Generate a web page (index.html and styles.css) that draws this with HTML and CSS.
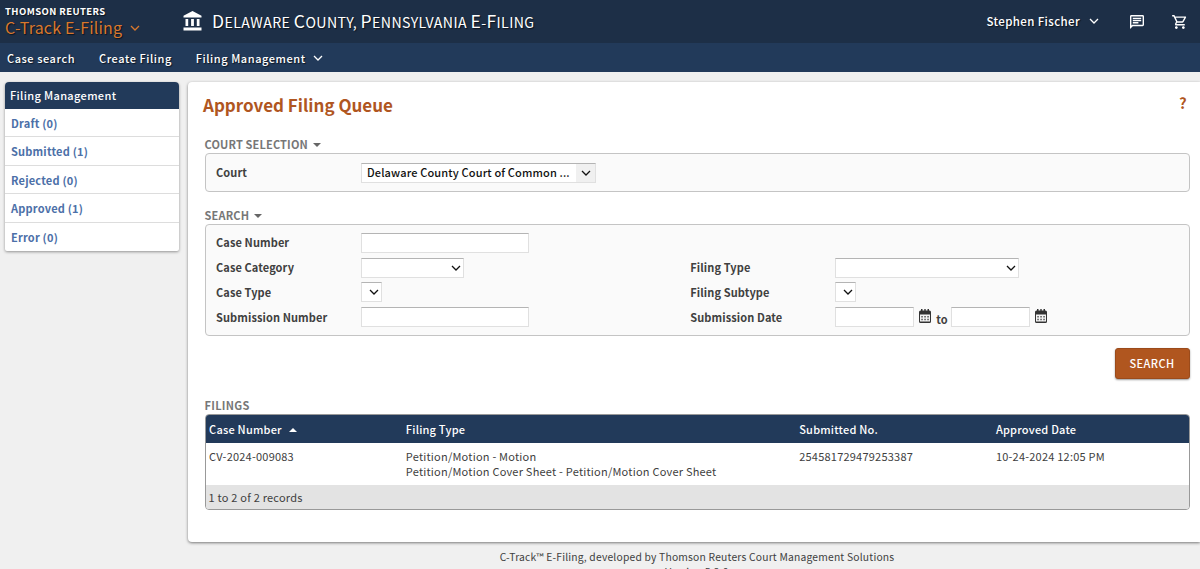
FILE: index.html
```html
<!DOCTYPE html>
<html lang="en">
<head>
    <meta charset="UTF-8">
    <meta name="viewport" content="width=device-width, initial-scale=1.0">
    <title>C-Track E-Filing</title>
    <link rel="stylesheet" href="styles.css">
</head>
<body>
    <header class="topbar">
        <div class="brand">
            <div class="brand-company">THOMSON REUTERS</div>
            <div class="brand-product">C-Track E-Filing
                <svg class="chevron" viewBox="0 0 10 6"><path d="M1 1l4 4 4-4"/></svg>
            </div>
        </div>
        <svg class="court-icon" viewBox="0 0 18 20"><path d="M9 0L0 4.8V6.5h18V4.8zM2 8v7h2.7V8zM7.6 8v7h2.8V8zM13.3 8v7H16V8zM0 16.5V19.5h18v-3z"/></svg>
        <h1><span>Delaware</span> <span>County,</span> <span>Pennsylvania</span> <span>E-</span><span>Filing</span></h1>
        <div class="user">Stephen Fischer
            <svg class="chevron" viewBox="0 0 10 6"><path d="M1 1l4 4 4-4"/></svg>
        </div>
        <svg class="top-icon message-icon" viewBox="2 2 20 20"><path d="M4 4h16v12H5.17L4 17.17V4m0-2c-1.1 0-1.99.9-1.99 2L2 22l4-4h14c1.1 0 2-.9 2-2V4c0-1.1-.9-2-2-2H4zm2 10h8v2H6v-2zm0-3h12v2H6V9zm0-3h12v2H6V6z"/></svg>
        <svg class="top-icon cart-icon" viewBox="1 2 21 20"><path d="M15.55 13c.75 0 1.41-.41 1.75-1.03l3.58-6.49c.37-.66-.11-1.48-.87-1.48H5.21l-.94-2H1v2h2l3.6 7.59-1.35 2.44C4.52 15.37 5.48 17 7 17h12v-2H7l1.1-2h7.45zM6.16 6h12.15l-2.76 5H8.53L6.16 6zM7 18c-1.1 0-1.99.9-1.99 2S5.900 22 7 22s2-.9 2-2-.9-2-2-2zm10 0c-1.100 0-1.990.9-1.990 2s.890 2 1.990 2 2-.9 2-2-.9-2-2-2z"/></svg>
    </header>
    <nav class="menu">
        <a>Case search</a>
        <a>Create Filing</a>
        <a>Filing Management
            <svg class="chevron" viewBox="0 0 10 6"><path d="M1 1l4 4 4-4"/></svg>
        </a>
    </nav>

    <div class="page">
        <aside class="sidebar">
            <h2>Filing Management</h2>
            <a>Draft (0)</a>
            <a>Submitted (1)</a>
            <a>Rejected (0)</a>
            <a>Approved (1)</a>
            <a>Error (0)</a>
        </aside>

        <main class="content">
            <div class="title-row">
                <h2>Approved Filing Queue</h2>
                <span class="help">?</span>
            </div>

            <h3>COURT SELECTION <span class="caret"></span></h3>
            <section class="box court-box">
                <label>Court</label>
                <div class="select court-select">
                    <span>Delaware County Court of Common ...</span>
                    <div class="select-button"><svg class="chevron" viewBox="0 0 10 6"><path d="M1 1l4 4 4-4"/></svg></div>
                </div>
            </section>

            <h3>SEARCH <span class="caret"></span></h3>
            <section class="box search-box">
                <label>Case Number</label>
                <input class="text-input" type="text">
                <span></span>
                <span></span>

                <label>Case Category</label>
                <div class="select category-select"><svg class="chevron" viewBox="0 0 10 6"><path d="M1 1l4 4 4-4"/></svg></div>
                <label>Filing Type</label>
                <div class="select type-select"><svg class="chevron" viewBox="0 0 10 6"><path d="M1 1l4 4 4-4"/></svg></div>

                <label>Case Type</label>
                <div class="select small-select"><svg class="chevron" viewBox="0 0 10 6"><path d="M1 1l4 4 4-4"/></svg></div>
                <label>Filing Subtype</label>
                <div class="select small-select"><svg class="chevron" viewBox="0 0 10 6"><path d="M1 1l4 4 4-4"/></svg></div>

                <label>Submission Number</label>
                <input class="text-input" type="text">
                <label>Submission Date</label>
                <div class="dates">
                    <input class="date-input" type="text">
                    <svg class="calendar" viewBox="0 0 12 14"><path class="cal-body" d="M1.500 1.500H2V0h1.500v1.500h1.800V0h1.400v1.500h1.800V0H10v1.500h.5Q12 1.500 12 3v9.500Q12 14 10.500 14h-9Q0 14 0 12.500V3Q0 1.500 1.500 1.500z"/><path class="cal-page" d="M1 5.500h10V12.500H1z"/><path class="cal-days" d="M2.300 7.800h7.500M2.300 10.500h7.500"/></svg>
                    <span class="to">to</span>
                    <input class="date-input" type="text">
                    <svg class="calendar" viewBox="0 0 12 14"><path class="cal-body" d="M1.500 1.500H2V0h1.500v1.500h1.800V0h1.400v1.500h1.800V0H10v1.500h.5Q12 1.500 12 3v9.500Q12 14 10.500 14h-9Q0 14 0 12.500V3Q0 1.500 1.500 1.500z"/><path class="cal-page" d="M1 5.500h10V12.500H1z"/><path class="cal-days" d="M2.300 7.800h7.500M2.300 10.500h7.500"/></svg>
                </div>
            </section>

            <div class="actions">
                <button class="search-button" type="button">SEARCH</button>
            </div>

            <h3 class="filings-heading">FILINGS</h3>
            <div class="table-wrap">
                <table>
                    <thead>
                        <tr>
                            <th>Case Number <span class="caret up"></span></th>
                            <th class="wide">Filing Type</th>
                            <th>Submitted No.</th>
                            <th>Approved Date</th>
                        </tr>
                    </thead>
                    <tbody>
                        <tr>
                            <td>CV-2024-009083</td>
                            <td>Petition/Motion - Motion<br>Petition/Motion Cover Sheet - Petition/Motion Cover Sheet</td>
                            <td>254581729479253387</td>
                            <td>10-24-2024 12:05 PM</td>
                        </tr>
                    </tbody>
                </table>
                <div class="records">1 to 2 of 2 records</div>
            </div>
        </main>
    </div>

    <footer>
        <div>C-Track™ E-Filing, developed by Thomson Reuters Court Management Solutions</div>
        <div>Version 5.2.0</div>
    </footer>
</body>
</html>
```
FILE: styles.css
```css
* {
    box-sizing: border-box;
}
body {
    margin: 0;
    height: 569px;
    overflow: hidden;
    background: #f0f0f0;
    color: #404040;
    font-family: "Noto Sans CJK SC", "Noto Sans", sans-serif;
    font-size: 11px;
    line-height: 16px;
    letter-spacing: 0.22px;
}
h1, h2, h3 {
    margin: 0;
}
.chevron {
    width: 10px;
    height: 6px;
    flex: none;
    fill: none;
    stroke: currentColor;
    stroke-width: 1.3;
}

/* header */
.topbar {
    display: flex;
    align-items: flex-start;
    height: 43px;
    background: #1d2f47;
    color: #fff;
    text-shadow: 1px 1px 1px rgba(0, 0, 0, 0.6);
}
.brand {
    width: 183px;
    padding: 5px 0 0 5px;
}
.brand-company {
    font-size: 9.5px;
    line-height: 13px;
    font-weight: 700;
    letter-spacing: 0.4px;
}
.brand-product {
    display: flex;
    align-items: center;
    gap: 8px;
    font-size: 16px;
    line-height: 19px;
    letter-spacing: 0.17px;
    color: #d9782d;
}
.court-icon {
    width: 19px;
    height: 20px;
    margin: 11px 10px 0 0;
    fill: #fff;
}
.topbar h1 {
    margin-top: 9px;
    font-size: 14.2px;
    line-height: 24px;
    font-weight: 400;
    text-transform: uppercase;
    letter-spacing: 0.38px;
}
/* larger first letter of each word, like small caps */
.topbar h1 span {
    display: inline-block;
}
.topbar h1 span::first-letter {
    font-size: 17.5px;
}
.user {
    display: flex;
    align-items: center;
    gap: 9px;
    margin: 13px 31px 0 auto;
    font-size: 11.5px;
    font-weight: 500;
    letter-spacing: 0.38px;
}
.top-icon {
    fill: #fff;
}
.message-icon {
    width: 14px;
    height: 14px;
    margin: 15px 28px 0 0;
}
.cart-icon {
    width: 15px;
    height: 14px;
    margin: 15px 13px 0 0;
}
.menu {
    display: flex;
    align-items: flex-start;
    gap: 24px;
    height: 29px;
    padding: 7px 7px 0;
    background: #223a5a;
    color: #fff;
    text-shadow: 1px 1px 1px rgba(0, 0, 0, 0.6);
    font-weight: 500;
    letter-spacing: 0.55px;
}
.menu a {
    display: flex;
    align-items: center;
    gap: 7px;
}

/* page */
.page {
    display: flex;
    align-items: flex-start;
    gap: 9px;
    padding: 10px 0 0 5px;
}
.sidebar {
    width: 173.5px;
    background: #fff;
    border-radius: 4px 4px 2px 2px;
    overflow: hidden;
    box-shadow: 0 1px 3px rgba(0, 0, 0, 0.4);
}
.sidebar h2 {
    padding: 0 5px;
    background: #223a5a;
    color: #fff;
    font-size: 11px;
    font-weight: 500;
    line-height: 26.5px;
    letter-spacing: 0.35px;
}
.sidebar a {
    display: block;
    height: 28.6px;
    padding: 0 6px;
    border-bottom: 1px solid #ddd;
    color: #4c70a8;
    font-weight: 700;
    line-height: 28px;
    letter-spacing: 0.2px;
}
.sidebar a:last-child {
    border-bottom: 0;
}
.content {
    flex: 1;
    height: 460px;
    padding: 10px 10px 0 17px;
    background: #fff;
    border-radius: 4px 0 0 4px;
    box-shadow: 0 1px 3px rgba(0, 0, 0, 0.5);
}
.title-row {
    display: flex;
    justify-content: space-between;
    height: 44px;
    margin-left: -1.5px;
    color: #b0561f;
}
.title-row h2 {
    font-size: 17px;
    line-height: 25px;
    font-weight: 700;
    letter-spacing: 0;
}
.help {
    padding-right: 3px;
    font-size: 15px;
    line-height: 22px;
    font-weight: 700;
}
h3 {
    color: #777;
    font-size: 11px;
    line-height: 16px;
    padding-bottom: 1px;
    font-weight: 700;
    letter-spacing: 0.15px;
}
.caret {
    display: inline-block;
    margin: 0 0 2px 2px;
    border: 4px solid transparent;
    border-top-color: #666;
    border-bottom: 0;
}
.caret.up {
    border-top: 0;
    border-bottom: 4px solid #fff;
}
.box {
    border: 1px solid #c4c4c4;
    border-radius: 4px;
    background: #fafafa;
    display: grid;
    padding-left: 10.5px;
}
label, .to {
    font-weight: 700;
    letter-spacing: 0.1px;
}
label {
    padding-bottom: 1.5px;
}
.court-box {
    grid-template-columns: 145px auto;
    align-items: center;
    height: 39px;
    margin-bottom: 15px;
}
.search-box {
    grid-template-columns: 145px 329.3px 145px 1fr;
    grid-auto-rows: 24.8px;
    align-items: center;
    height: 112px;
    padding-top: 5.5px;
}
.text-input, .date-input, .select {
    height: 20px;
    padding: 0;
    background: #fff;
    border: 1px solid #e0e0e0;
    border-top: 1px solid #b4b4b4;
    color: #111;
}
.text-input {
    width: 168px;
}
.date-input {
    width: 79px;
}
.select {
    display: flex;
    align-items: center;
    justify-content: flex-end;
    padding-right: 2px;
}
.court-select {
    width: 235px;
    justify-content: space-between;
    padding: 0 0 0 5px;
    font-weight: 500;
    line-height: 16px;
    letter-spacing: 0.14px;
    white-space: nowrap;
}
.court-select span {
    padding-bottom: 2px;
}
.select-button {
    display: flex;
    align-items: center;
    justify-content: center;
    width: 19px;
    height: 18px;
    background: #f0f0f0;
}
.category-select {
    width: 103px;
}
.type-select {
    width: 184px;
}
.small-select {
    width: 21px;
}
.dates {
    display: flex;
    align-items: center;
}
.calendar {
    width: 12px;
    height: 14px;
    margin: 0 5px 2px;
}
.cal-body {
    fill: #333;
}
.cal-page {
    fill: #f4f4f4;
}
.cal-days {
    stroke: #555;
    stroke-width: 1.5;
    stroke-dasharray: 1.5;
}
.to {
    margin: 3px 3px 0 0;
}
.actions {
    display: flex;
    justify-content: flex-end;
    padding-top: 12px;
}
.search-button {
    width: 75px;
    height: 31px;
    padding: 0 1px 1px 0;
    background: #b0561f;
    border: 1px solid #9b4b1b;
    border-radius: 3px;
    box-shadow: 0 1px 2px rgba(0, 0, 0, 0.4);
    color: #fff;
    font-family: inherit;
    font-size: 11px;
    font-weight: 500;
    letter-spacing: 0.4px;
}
.filings-heading {
    margin: 18px 0 1px;
    padding: 0;
    letter-spacing: 0.3px;
}

/* filings table */
.table-wrap {
    height: 96px;
    border: 1px solid #999;
    border-radius: 4px;
    overflow: hidden;
}
table {
    width: 100%;
    border-collapse: collapse;
    table-layout: fixed;
}
th, td {
    padding: 0 3.6px;
    text-align: left;
}
th {
    height: 28px;
    background: #223a5a;
    color: #fff;
    font-weight: 500;
}
th.wide {
    width: 40%;
}
th .caret {
    margin-left: 4px;
}
td {
    height: 42px;
    padding-top: 5.5px;
    vertical-align: top;
    line-height: 15.5px;
}
.records {
    padding: 0 3px;
    background: #e3e3e3;
    line-height: 24px;
}
footer {
    padding: 6.6px 0 0 194px;
    font-size: 10.3px;
    line-height: 15px;
    letter-spacing: 0.2px;
    text-align: center;
}
```
